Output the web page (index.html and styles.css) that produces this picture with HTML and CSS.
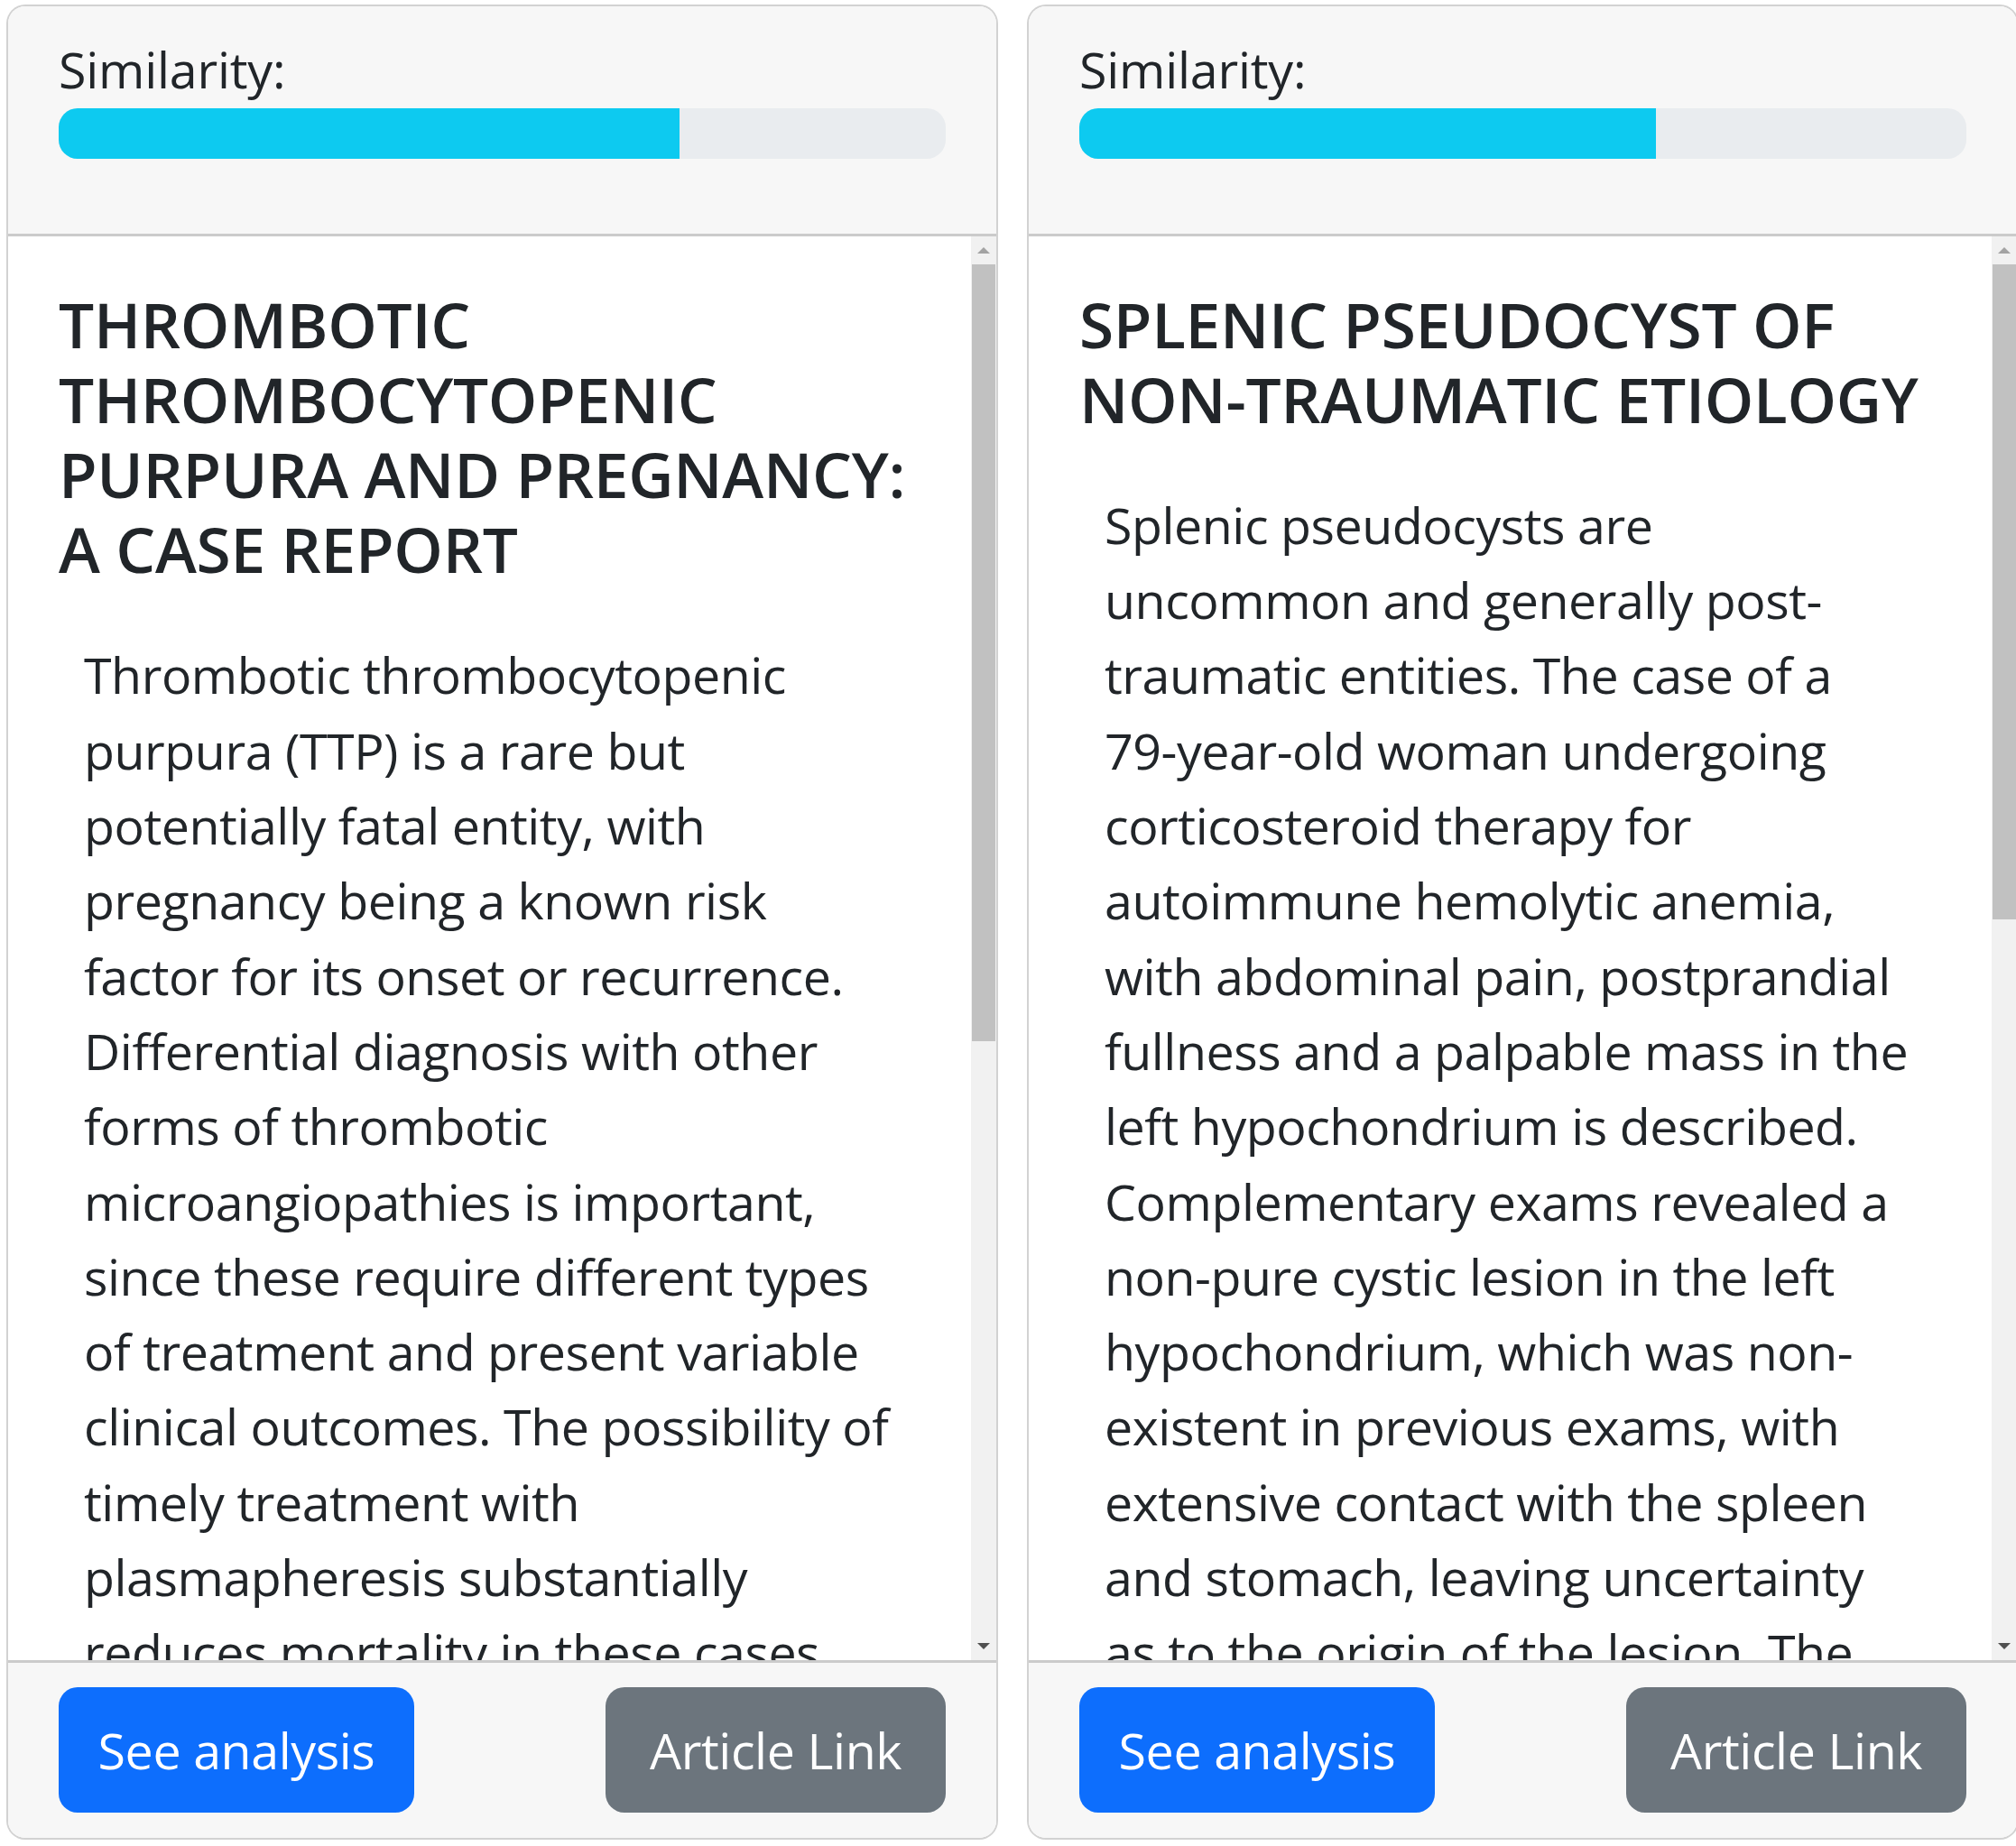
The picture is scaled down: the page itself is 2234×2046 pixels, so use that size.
FILE: index.html
```html
<!DOCTYPE html>
<html lang="en">
<head>
<meta charset="utf-8">
<title>Similar articles</title>
<link rel="stylesheet" href="styles.css">
</head>
<body>
<div class="deck">
  <article class="card">
    <header class="card-header">
      <div class="label">Similarity:</div>
      <div class="progress"><div class="progress-bar" style="width:70%"></div></div>
    </header>
    <div class="card-body">
      <div class="scroll-content">
        <h5 class="title">THROMBOTIC THROMBOCYTOPENIC PURPURA AND PREGNANCY: A CASE REPORT</h5>
        <p class="abstract">Thrombotic thrombocytopenic<br>purpura (TTP) is a rare but<br>potentially fatal entity, with<br>pregnancy being a known risk<br>factor for its onset or recurrence.<br>Differential diagnosis with other<br>forms of thrombotic<br>microangiopathies is important,<br>since these require different types<br>of treatment and present variable<br>clinical outcomes. The possibility of<br>timely treatment with<br>plasmapheresis substantially<br>reduces mortality in these cases.<br>We report the case of a 33-year-old pregnant woman with a diagnosis of TTP at 26 weeks of gestation, who was treated with plasmapheresis and corticosteroids, with clinical and analytical improvement. The pregnancy was monitored by a multidisciplinary team and the delivery occurred at 37 weeks, without complications for the mother or the newborn.</p>
      </div>
      <div class="scrollbar">
        <div class="sb-btn sb-up"></div>
        <div class="sb-track"><div class="sb-thumb" style="height:861px"></div></div>
        <div class="sb-btn sb-down"></div>
      </div>
    </div>
    <footer class="card-footer">
      <a class="btn btn-primary" href="#">See analysis</a>
      <a class="btn btn-secondary" href="#">Article Link</a>
    </footer>
  </article>

  <article class="card">
    <header class="card-header">
      <div class="label">Similarity:</div>
      <div class="progress"><div class="progress-bar" style="width:65%"></div></div>
    </header>
    <div class="card-body">
      <div class="scroll-content">
        <h5 class="title">SPLENIC PSEUDOCYST OF NON-TRAUMATIC ETIOLOGY</h5>
        <p class="abstract">Splenic pseudocysts are<br>uncommon and generally post-<br>traumatic entities. The case of a<br>79-year-old woman undergoing<br>corticosteroid therapy for<br>autoimmune hemolytic anemia,<br>with abdominal pain, postprandial<br>fullness and a palpable mass in the<br>left hypochondrium is described.<br>Complementary exams revealed a<br>non-pure cystic lesion in the left<br>hypochondrium, which was non-<br>existent in previous exams, with<br>extensive contact with the spleen<br>and stomach, leaving uncertainty<br>as to the origin of the lesion. The<br>patient underwent exploratory laparotomy with splenectomy, and the histological examination of the surgical specimen confirmed the diagnosis of a splenic pseudocyst, without evidence of malignancy. The postoperative period was uneventful.</p>
      </div>
      <div class="scrollbar">
        <div class="sb-btn sb-up"></div>
        <div class="sb-track"><div class="sb-thumb" style="height:726px"></div></div>
        <div class="sb-btn sb-down"></div>
      </div>
    </div>
    <footer class="card-footer">
      <a class="btn btn-primary" href="#">See analysis</a>
      <a class="btn btn-secondary" href="#">Article Link</a>
    </footer>
  </article>
</div>
</body>
</html>
```

FILE: styles.css
```css
html, body {
  margin: 0;
  overflow: hidden;
  background: #fff;
}

body {
  padding: 5px 0 0 7px;
  font-family: "Open Sans", "Noto Sans", "DejaVu Sans", sans-serif;
  color: #212529;
}

.deck {
  display: flex;
  gap: 32px;
}

.card {
  flex: 0 0 1099px;
  height: 2034px;
  box-sizing: border-box;
  border: 2px solid rgba(0, 0, 0, 0.175);
  border-radius: 21px;
  display: flex;
  flex-direction: column;
  overflow: hidden;
  background: #fff;
}

.card-header {
  background: #f7f7f7;
  padding: 28px 56px 27.75px;
  border-bottom: 3px solid rgba(0, 0, 0, 0.175);
}

.label {
  font-size: 55.5px;
  line-height: 83.3px;
  margin-bottom: 1.5px;
  letter-spacing: -0.2px;
}

.progress {
  display: flex;
  height: 56px;
  background: #e9ecef;
  border-radius: 21px;
  overflow: hidden;
  margin-bottom: 55.5px;
}

.progress-bar {
  background: #0dcaf0;
}

.card-body {
  flex: 1;
  min-height: 0;
  display: flex;
  background: #fff;
}

.scroll-content {
  flex: 1;
  min-width: 0;
  overflow: hidden;
  padding: 55.5px 28px 0 56px;
}

.title {
  margin: 0 0 27.75px;
  font-size: 69.4px;
  line-height: 83.3px;
  font-weight: 600;
  letter-spacing: -0.3px;
}

.abstract {
  margin: 0;
  padding: 28px 0 28px 28px;
  font-size: 55.5px;
  line-height: 83.3px;
  letter-spacing: -0.45px;
}

.scrollbar {
  width: 28px;
  flex: 0 0 28px;
  background: #f1f1f1;
  display: flex;
  flex-direction: column;
}

.sb-btn {
  height: 31px;
  flex: 0 0 31px;
  display: flex;
  align-items: center;
  justify-content: center;
}

.sb-up::before {
  content: "";
  border-left: 7px solid transparent;
  border-right: 7px solid transparent;
  border-bottom: 7px solid #a3a3a3;
}

.sb-down::before {
  content: "";
  border-left: 7px solid transparent;
  border-right: 7px solid transparent;
  border-top: 7px solid #505050;
}

.sb-track {
  flex: 1;
}

.sb-thumb {
  margin: 0 1px;
  background: #c1c1c1;
}

.card-footer {
  background: #f7f7f7;
  border-top: 3px solid rgba(0, 0, 0, 0.175);
  padding: 27.75px 56px;
  display: flex;
  justify-content: space-between;
}

.btn {
  display: block;
  font-size: 55.5px;
  line-height: 83.3px;
  padding: 27.75px 0;
  text-align: center;
  border-radius: 21px;
  color: #fff;
  text-decoration: none;
  letter-spacing: -0.4px;
}

.btn-primary {
  width: 394px;
  background: #0d6efd;
}

.btn-secondary {
  width: 377px;
  background: #6c757d;
}
```
